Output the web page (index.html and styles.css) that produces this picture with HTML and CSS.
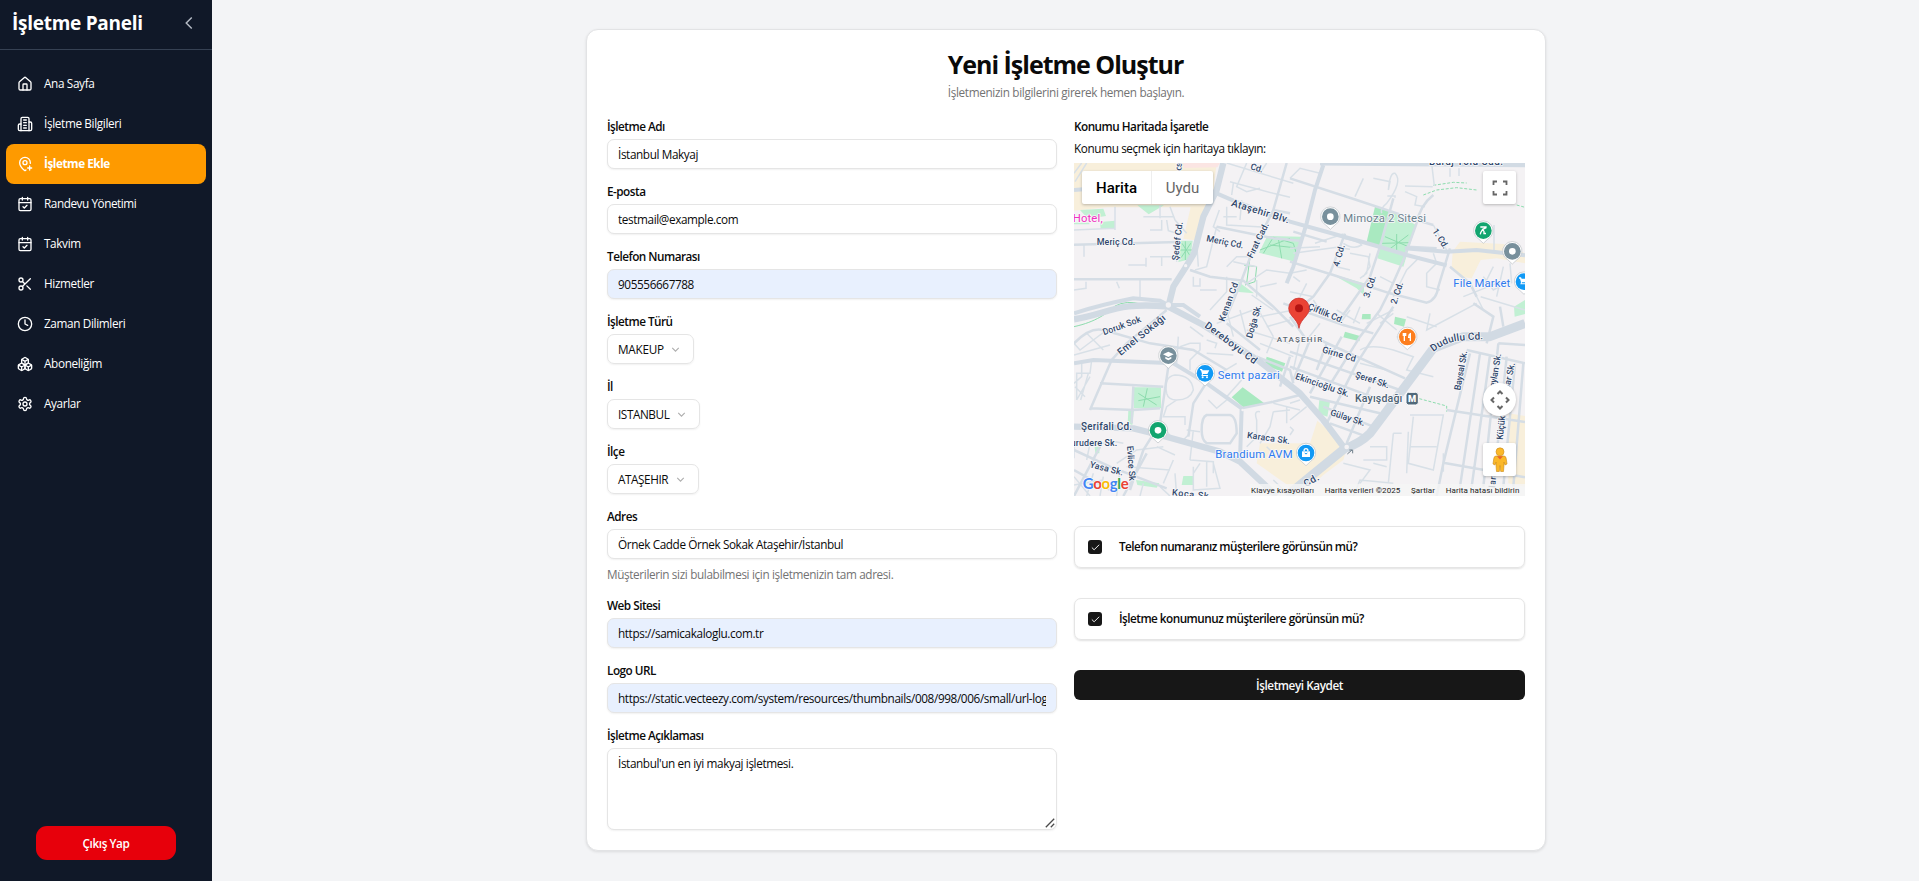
FILE: index.html
```html
<!DOCTYPE html>
<html lang="tr">
<head>
<meta charset="utf-8">
<title>İşletme Paneli</title>
<link rel="stylesheet" href="styles.css">
</head>
<body>
<div class="app">
  <aside class="sidebar">
    <header class="brand">
      <span class="brand-name">İşletme Paneli</span>
      <svg class="collapse" viewBox="0 0 24 24"><path d="m15 18-6-6 6-6"/></svg>
    </header>
    <nav class="nav">
      <a class="nav-item"><svg class="icon" viewBox="0 0 24 24"><path d="M15 21v-8a1 1 0 0 0-1-1h-4a1 1 0 0 0-1 1v8"/><path d="M3 10a2 2 0 0 1 .709-1.528l7-5.999a2 2 0 0 1 2.582 0l7 5.999A2 2 0 0 1 21 10v9a2 2 0 0 1-2 2H5a2 2 0 0 1-2-2z"/></svg><span>Ana Sayfa</span></a>
      <a class="nav-item"><svg class="icon" viewBox="0 0 24 24"><path d="M6 22V4a2 2 0 0 1 2-2h8a2 2 0 0 1 2 2v18Z"/><path d="M6 12H4a2 2 0 0 0-2 2v6a2 2 0 0 0 2 2h2"/><path d="M18 9h2a2 2 0 0 1 2 2v9a2 2 0 0 1-2 2h-2"/><path d="M10 6h4M10 10h4M10 14h4M10 18h4"/></svg><span>İşletme Bilgileri</span></a>
      <a class="nav-item active"><svg class="icon" viewBox="0 0 24 24"><path d="M19.914 11.105A7.298 7.298 0 0 0 20 10a8 8 0 0 0-16 0c0 4.993 5.539 10.193 7.399 11.799a1 1 0 0 0 1.202 0 32 32 0 0 0 .824-.738"/><circle cx="12" cy="10" r="3"/><path d="M16 18h6M19 15v6"/></svg><span>İşletme Ekle</span></a>
      <a class="nav-item"><svg class="icon" viewBox="0 0 24 24"><path d="M8 2v4M16 2v4"/><rect width="18" height="18" x="3" y="4" rx="2"/><path d="M3 10h18M9 16l2 2 4-4"/></svg><span class="wide">Randevu Yönetimi</span></a>
      <a class="nav-item"><svg class="icon" viewBox="0 0 24 24"><path d="M8 2v4M16 2v4"/><rect width="18" height="18" x="3" y="4" rx="2"/><path d="M3 10h18M9 16l2 2 4-4"/></svg><span>Takvim</span></a>
      <a class="nav-item"><svg class="icon" viewBox="0 0 24 24"><circle cx="6" cy="6" r="3"/><path d="M8.12 8.12 12 12M20 4 8.12 15.88"/><circle cx="6" cy="18" r="3"/><path d="M14.8 14.8 20 20"/></svg><span>Hizmetler</span></a>
      <a class="nav-item"><svg class="icon" viewBox="0 0 24 24"><circle cx="12" cy="12" r="10"/><path d="M12 6v6l4 2"/></svg><span>Zaman Dilimleri</span></a>
      <a class="nav-item"><svg class="icon" viewBox="0 0 24 24"><path d="M2.97 12.92A2 2 0 0 0 2 14.63v3.24a2 2 0 0 0 .97 1.71l3 1.8a2 2 0 0 0 2.06 0L12 19v-5.5l-5-3-4.03 2.42Z"/><path d="m7 16.5-4.74-2.85M7 16.5l5-3M7 16.5v5.17"/><path d="M12 13.5V19l3.97 2.38a2 2 0 0 0 2.06 0l3-1.8a2 2 0 0 0 .97-1.71v-3.24a2 2 0 0 0-.97-1.71L17 10.5l-5 3Z"/><path d="m17 16.5-5-3M17 16.5l4.74-2.85M17 16.5v5.17"/><path d="M7.97 4.42A2 2 0 0 0 7 6.13v4.37l5 3 5-3V6.13a2 2 0 0 0-.97-1.71l-3-1.8a2 2 0 0 0-2.06 0l-3 1.8Z"/><path d="M12 8 7.26 5.15M12 8l4.74-2.85M12 13.5V8"/></svg><span>Aboneliğim</span></a>
      <a class="nav-item"><svg class="icon" viewBox="0 0 24 24"><path d="M12.22 2h-.44a2 2 0 0 0-2 2v.18a2 2 0 0 1-1 1.73l-.43.25a2 2 0 0 1-2 0l-.15-.08a2 2 0 0 0-2.73.73l-.22.38a2 2 0 0 0 .73 2.73l.15.1a2 2 0 0 1 1 1.72v.51a2 2 0 0 1-1 1.74l-.15.09a2 2 0 0 0-.73 2.73l.22.38a2 2 0 0 0 2.73.73l.15-.08a2 2 0 0 1 2 0l.43.25a2 2 0 0 1 1 1.73V20a2 2 0 0 0 2 2h.44a2 2 0 0 0 2-2v-.18a2 2 0 0 1 1-1.73l.43-.25a2 2 0 0 1 2 0l.15.08a2 2 0 0 0 2.73-.73l.22-.39a2 2 0 0 0-.73-2.73l-.15-.08a2 2 0 0 1-1-1.74v-.5a2 2 0 0 1 1-1.74l.15-.09a2 2 0 0 0 .73-2.73l-.22-.38a2 2 0 0 0-2.73-.73l-.15.08a2 2 0 0 1-2 0l-.43-.25a2 2 0 0 1-1-1.73V4a2 2 0 0 0-2-2z"/><circle cx="12" cy="12" r="3"/></svg><span>Ayarlar</span></a>
    </nav>
    <button class="logout">Çıkış Yap</button>
  </aside>

  <main class="main">
    <section class="card">
      <h1 class="title">Yeni İşletme Oluştur</h1>
      <p class="subtitle">İşletmenizin bilgilerini girerek hemen başlayın.</p>
      <div class="columns">
        <div class="col fields">
          <div class="field"><label class="label">İşletme Adı</label><input class="input" value="İstanbul Makyaj"></div>
          <div class="field"><label class="label">E-posta</label><input class="input" value="testmail@example.com"></div>
          <div class="field"><label class="label">Telefon Numarası</label><input class="input filled" value="905556667788"></div>
          <div class="field"><label class="label">İşletme Türü</label><div class="select select-type"><span>MAKEUP</span><svg class="chev" viewBox="0 0 24 24"><path d="m6 9 6 6 6-6"/></svg></div></div>
          <div class="field"><label class="label">İl</label><div class="select select-city"><span>ISTANBUL</span><svg class="chev" viewBox="0 0 24 24"><path d="m6 9 6 6 6-6"/></svg></div></div>
          <div class="field"><label class="label">İlçe</label><div class="select select-district"><span>ATAŞEHIR</span><svg class="chev" viewBox="0 0 24 24"><path d="m6 9 6 6 6-6"/></svg></div></div>
          <div class="field"><label class="label">Adres</label><input class="input" value="Örnek Cadde Örnek Sokak Ataşehir/İstanbul"><p class="hint">Müşterilerin sizi bulabilmesi için işletmenizin tam adresi.</p></div>
          <div class="field"><label class="label">Web Sitesi</label><input class="input filled" value="https://samicakaloglu.com.tr"></div>
          <div class="field"><label class="label">Logo URL</label><input class="input filled url" value="https://static.vecteezy.com/system/resources/thumbnails/008/998/006/small/url-logo.jpg"></div>
          <div class="field"><label class="label">İşletme Açıklaması</label><div class="area-wrap"><textarea class="input area">İstanbul'un en iyi makyaj işletmesi.</textarea><svg class="grip" viewBox="0 0 10 10"><path d="M.8 9.200 9.200.8M5.800 9.200 9.200 5.800"/></svg></div></div>
        </div>

        <div class="col">
          <span class="label">Konumu Haritada İşaretle</span>
          <p class="map-help">Konumu seçmek için haritaya tıklayın:</p>
          <div class="map">
            <svg class="map-canvas" viewBox="42 159 1353 999" preserveAspectRatio="none">
              <rect class="land" x="42" y="159" width="1353" height="999"/>
              <g class="sand">
                <path d="M42 159H470L458 260 415 392 370 386 392 292H140L42 302Z"/>
                <path d="M1200 395 1330 402 1395 430V460L1310 445 1262 450 1235 505 1200 500 1175 470 1178 425Z"/>
                <path d="M772 932 835 985 862 1010 850 1050 790 1095 720 1158 690 1130 590 1060 600 1000 750 1000Z"/>
                <path d="M1345 910 1395 918V1130L1345 1120Z"/>
              </g>
              <path class="rose" d="M368 159H480L472 172 372 174Z"/>
              <g class="park">
                <path d="M60 300 130 296 138 318 84 326ZM120 336 165 332V357H122ZM232 286H312L266 313ZM42 338H88V343H42Z"/>
                <path d="M362 392H398L390 448 355 456ZM622 378 722 380 728 392 705 455 597 428ZM535 515 582 550 528 545Z"/>
                <path d="M990 302 1068 345 1030 470 952 445ZM815 492 912 520 912 556 890 535Z"/>
                <path d="M222 832H303V895H222ZM205 902 222 896 217 945 203 940ZM370 1098H402V1125H365ZM228 1110 298 1120 290 1133 232 1125ZM104 1010H118V1030H106Z"/>
                <path d="M778 870 810 875 802 920 774 910ZM1362 590 1395 570V612L1364 620Z"/>
              </g>
              <g class="park deep">
                <path d="M945 290 990 302 960 408 920 395ZM620 740 676 760 666 785 614 765ZM548 832 613 880 550 892 515 862Z"/>
                <path d="M855 665 900 678 898 694 850 682ZM907 612H932V628H905ZM1005 620 1038 628 1032 650 1002 642Z"/>
              </g>
              <path class="green-line" d="M42 650C110 635 140 610 165 588Q200 570 242 582M366 400 392 440M392 400 360 448M376 394V450M362 420H396M610 430 640 382 700 400 712 440M630 405 720 415M655 385 665 445M600 420 690 385"/>
              <path class="green-line" d="M975 380 1045 410M985 420 1045 375M1010 372V425M965 400 1048 398M235 850 290 885M262 835 250 890M235 872 300 860M552 465 590 470 585 515 555 525M570 440 560 520"/>
              <path class="green-line dashed" d="M1120 226 1180 217 1220 219M1090 255 1130 240 1190 233 1250 240M1370 285 1395 292M1078 866 1160 888V905"/>

              <g class="lane">
                <path d="M65 159 42 190M45 215 80 159M165 290V360M42 360 165 355M300 285V325M250 320H340M330 290 345 330 380 370M305 330V360H270M320 330 325 362 350 370"/>
                <path d="M72 405V440M205 465H260M270 440H350V455M258 443V470M305 440V468M240 510V562M42 540 78 535V515M170 515 178 535"/>
                <path d="M400 500V528H420V505M392 480 450 500M410 400 415 470M470 350 440 470 405 480M478 300 460 350 480 365M500 159 700 220M560 159 530 230 560 245 600 235M620 159 600 190"/>
                <path d="M510 215 640 250 690 262M520 220 515 255M500 290 500 345 620 352M490 320H530M545 270 540 330M520 455 590 470M500 470 530 440H580"/>
                <path d="M560 520 620 480 690 490M575 555 640 600M600 530 650 520M590 510V560M500 500V545L450 600M545 510 500 600M420 540H470"/>
                <path d="M690 205 720 175 780 190M910 205 885 260M940 205 990 215 985 240M985 240Q990 185 1005 190 1030 215 980 280 960 295 965 310M982 258H1005V263M1035 228 1118 230M1035 245 1070 260 1065 285 1095 290"/>
                <path d="M1115 160 1123 228M1170 175V200M1197 175V198M690 415 780 410M700 430 830 412 870 418M765 400 850 372M850 385Q900 395 905 405 880 420 850 400M870 430 925 440 930 470 910 500M830 470 870 480M930 430 920 490 900 505"/>
                <path d="M690 490 740 480M700 500 720 515M690 545 760 560M740 520 720 560M960 500 1000 520M1000 560 1040 480 1080 440M1120 430 1130 460 1100 490V530L1140 540M1120 345 1165 430"/>
                <path d="M1302 345V430M1210 560 1310 520M1240 540 1270 600M1270 500 1300 540 1350 510M1330 470 1310 560M1350 460 1355 520M1300 470 1280 510M1262 560 1395 600"/>
                <path d="M42 700 60 720 140 660M42 735 150 705M80 670 130 720M65 760V800L42 820M95 750 90 790 50 790V870M50 870 90 800M62 870 85 790M45 830 75 860"/>
                <path d="M320 850Q310 800 345 795 395 795 400 840 390 870 350 870 325 870 320 850M350 870 320 890 310 920H350L375 920V945M390 700H420V720L390 750V780M360 710 390 700M440 690 470 700 465 715M390 650 430 680M480 790 530 760"/>
                <path d="M445 870 470 895 500 870M500 860 545 810M440 730 520 735M355 680 350 760M380 960 420 965M310 950 340 990M360 1000 390 970M400 960 390 1050M390 1050 460 1055V1090M400 1070V1140L480 1135 460 1060M420 1060 400 1090M440 1055V1130"/>
                <path d="M600 905Q580 900 590 930V980L560 1010M640 905 630 950 600 1000M640 880 720 900M680 890V940M640 905 690 900M620 1010 640 1030M42 990V1045M60 1000H160M90 1000 80 1050M140 990 190 1000M170 1060 230 1020 310 1010M290 1010 345 1035"/>
                <path d="M42 1100 90 1158M100 1090 80 1158M130 1100 120 1158M180 1080 170 1158M42 1125 130 1110M250 1120 240 1158M300 1130 330 1158M340 1050 310 1120M200 1070 330 1080M345 1090 350 1158"/>
              </g>
              <g class="lane">
                <path d="M500 600 520 680M470 640 580 600M540 600 560 680M590 590 640 680M600 620 700 600M620 650 690 630M560 660 690 700M640 680 620 730M600 700 700 740"/>
                <path d="M720 690 700 780M830 600 900 640M870 600 840 640M900 590 880 640M950 610 1010 660M1000 610 960 640M780 640 740 690M1040 620 1130 650M1110 610 1100 660 1250 580M1010 680 1060 700M920 640 1000 600M760 570 780 600"/>
                <path d="M900 720Q930 700 1000 720L1060 740 1040 780 1120 800M900 760 980 780M1050 915H1150L1120 1080 1045 1060 1060 920M1050 1010H1130M1000 970H1025M1000 970 985 1120M1045 965 1040 1090M930 1010H980V1050H910M850 1060 930 1080 900 1120M940 1060 980 1070M880 1158 900 1110 1000 1120M1150 1030V1085"/>
                <path d="M640 1110 690 1158M690 930 740 890M690 880 720 870M690 950 700 960 690 975"/>
              </g>

              <g class="street">
                <path d="M42 404 355 396M42 508 335 508M680 159 640 300 575 430 545 510M640 300 690 310M390 480 450 500 550 512 640 590 700 650M545 512 500 620M470 350 640 385 720 392"/>
                <path d="M700 365 800 395M690 205 890 270 1085 335 1120 345M1120 255Q1080 285 1068 345L1030 450 990 540 960 600 900 680 800 840M1000 265 960 410 930 500 860 600 830 640"/>
                <path d="M855 371 810 490 760 560 710 600M690 455 820 495 990 550 1100 578Q1130 570 1135 530L1170 415M1130 415 1040 410M1170 470 1230 520 1250 560"/>
                <path d="M320 600 200 700 155 750 120 830 90 900M120 820 310 830M90 895 220 900 300 895M325 770 300 940 250 1020 210 1140M435 825 400 880 385 980M42 700Q90 650 130 660L270 700 400 720 500 780M220 830 215 940"/>
                <path d="M440 915H510Q530 920 530 970L510 1000H440Q425 990 425 960 425 920 440 915ZM545 895 640 875 720 855M590 740 690 780 700 820M500 640 600 720M690 620 740 690M42 1020 150 1070 320 1135M42 1080 150 1140M42 1158 120 1010M190 1158 260 1030"/>
              </g>
              <g class="street">
                <path d="M670 580 750 610 850 645 940 670M780 690 1035 805M690 725 1020 840M690 770 990 880M750 860 960 910M790 890 940 950M810 940 920 980M845 680 750 850M890 760 800 940M930 830 860 1000M1000 590 890 760M690 740 660 830M750 690 700 810M800 700 770 780"/>
                <path d="M1220 720 1395 760M1160 900 1395 936M1150 1058 1395 1102M1230 730 1150 1060 1130 1158M1260 730 1200 1130M1290 735 1235 1130M1315 700 1270 1130M1340 740 1300 1130M1365 760 1330 1130M1390 760 1360 1130M1315 700 1395 705M1240 580 1300 620 1280 700M1320 590 1330 650"/>
              </g>
              <g class="road">
                <path class="top-road" d="M780 159 1395 164"/>
                <path d="M790 165 765 240 740 340 700 470 680 520"/>
                <path d="M470 250 520 272 690 335 780 360 940 405 1040 435 1160 466M1035 415 1160 425 1250 420 1395 436"/>
                <path d="M42 240 70 238M42 610Q120 585 220 565L300 572 325 585 370 585 420 620"/>
                <path d="M42 760 100 750 340 760 440 820 545 895 540 1050"/>
              </g>
              <g class="avenue">
                <path d="M490 159 470 240 430 320 402 430 375 475 340 530 325 590"/>
                <path d="M42 628C150 610 170 575 325 590L430 645 600 755 720 850 790 930 850 1010"/>
                <path d="M42 950 220 955 300 975 480 1025 540 1055 650 1158"/>
                <path class="thick" d="M1395 640 1290 680H1210L1120 715 990 890 930 970Q900 1000 855 1015L750 1100 680 1158"/>
              </g>
              <circle class="round" cx="325" cy="585" r="8"/><circle class="round" cx="377" cy="467" r="5"/><circle class="round" cx="860" cy="1011" r="7"/><circle class="round" cx="548" cy="900" r="4"/>
              <path class="arrow" d="M862 1032 876 1020M868 1020H878V1030"/>

              <g class="street-name">
                <text x="110" y="406" textLength="116">Meriç Cd.</text>
                <text transform="translate(438 394) rotate(11)" textLength="113">Meriç Cd.</text>
                <text transform="translate(512 287) rotate(17)" textLength="180" class="big">Ataşehir Blv.</text>
                <text transform="translate(354 452) rotate(-83)" textLength="116">Şedef Cd.</text>
                <text transform="translate(364 182) rotate(-85)" textLength="50">os Cd.</text>
                <text transform="translate(570 178) rotate(15)" textLength="38">Cd.</text>
                <text transform="translate(577 446) rotate(-64)" textLength="114">Fırat Cad.</text>
                <text transform="translate(493 636) rotate(-70)" textLength="122">Kenan Cd</text>
                <text transform="translate(576 686) rotate(-74)" textLength="104">Doğa Sk.</text>
                <text transform="translate(132 676) rotate(-20)" textLength="120">Doruk Sok</text>
                <text transform="translate(182 738) rotate(-39)" textLength="176" class="big">Emel Sokağı</text>
                <text transform="translate(432 650) rotate(37)" textLength="188" class="big">Dereboyu Cd</text>
                <text x="63" y="961" textLength="153" class="big">Şerifali Cd.</text>
                <text x="32" y="1008" textLength="140">urudere Sk.</text>
                <text transform="translate(201 1008) rotate(86)" textLength="105">Evlice Sk</text>
                <text transform="translate(88 1072) rotate(14)" textLength="102">Yasa Sk.</text>
                <text transform="translate(335 1156) rotate(6)" textLength="120">Koca Sk.</text>
                <text transform="translate(560 984) rotate(8)" textLength="130">Karaca Sk.</text>
                <text x="1107" y="164" textLength="222" class="big">Baraj Yolu Cad.</text>
                <text transform="translate(836 472) rotate(-74)" textLength="68">4. Cd.</text>
                <text transform="translate(927 565) rotate(-72)" textLength="68">3. Cd.</text>
                <text transform="translate(1009 584) rotate(-72)" textLength="68">2. Cd.</text>
                <text transform="translate(1116 363) rotate(57)" textLength="66">1. Cd.</text>
                <text transform="translate(742 596) rotate(23)" textLength="114">Çiftlik Cd.</text>
                <text transform="translate(785 727) rotate(16)" textLength="104">Girne Cd</text>
                <text transform="translate(884 802) rotate(18)" textLength="106">Şeref Sk.</text>
                <text transform="translate(704 806) rotate(19)" textLength="170">Ekincioğlu Sk.</text>
                <text transform="translate(809 915) rotate(18)" textLength="108">Gülay Sk.</text>
                <text class="big" x="1120 1136 1151 1167 1183 1191 1199 1216 1224 1244 1261" y="726 714 706 699 694 693 692 690 690 689 688" rotate="-36 -30 -24 -16 -10 -8 -5 -3 -3 -3 -3">Dudullu Cd.</text>
                <text transform="translate(1201 842) rotate(-80)" textLength="120">Baysal Sk.</text>
                <text transform="translate(1303 850) rotate(-80)" textLength="120">Ceylan Sk.</text>
                <text transform="translate(1348 840) rotate(-78)" textLength="82">nar Sk.</text>
                <text transform="translate(1328 990) rotate(-84)" textLength="72">Küçük</text>
                <text transform="translate(1305 1134) rotate(-84)" textLength="34">lar</text>
                <text transform="translate(738 1132) rotate(-30)" textLength="48" class="big">Cd.</text>
              </g>
              <text class="area-name" x="650" y="697" textLength="137">ATAŞEHİR</text>
              <text class="place pink" x="38" y="337" textLength="90">Hotel,</text>
              <text class="place gray" x="850" y="336" textLength="248">Mimoza 2 Sitesi</text>
              <text class="place blue" x="1180" y="531" textLength="171">File Market</text>
              <text class="place blue" x="473" y="807" textLength="186">Semt pazari</text>
              <text class="place blue" x="466" y="1045" textLength="232">Brandium AVM</text>
              <text class="place slate" x="885" y="876" textLength="142">Kayışdağı</text>
              <rect class="metro" x="1038" y="847" width="37" height="38" rx="8"/><text class="metro-m" x="1044" y="876">M</text>

              <g class="poi">
                <g transform="translate(811 320)"><path class="drop" d="M0 38 -14 25A29 29 0 1 1 14 25Z"/><circle r="25" fill="#78909c"/><circle r="10" fill="#fff"/></g>
                <g transform="translate(1357 424)"><path class="drop" d="M0 38 -14 25A29 29 0 1 1 14 25Z"/><circle r="25" fill="#78909c"/><circle r="10" fill="#fff"/></g>
                <g transform="translate(1270 362)"><path class="drop" d="M0 38 -14 25A29 29 0 1 1 14 25Z"/><circle r="25" fill="#12a56f"/><path class="glyph" d="M-9-11H10M9-9-2-4-8 6-9 11M-2-4 2 2V11M6 6V11"/></g>
                <g transform="translate(325 737)"><path class="drop" d="M0 38 -14 25A29 29 0 1 1 14 25Z"/><circle r="25" fill="#78909c"/><path fill="#fff" d="M-16-4 0-12 16-4 0 4ZM-9 3 0 8 9 3V9L0 14-9 9Z"/></g>
                <g transform="translate(435 790)"><path class="drop" d="M0 38 -14 25A29 29 0 1 1 14 25Z"/><circle r="25" fill="#1199f5"/><path fill="#fff" d="M-15-13H-9L-7-9H13L7 2H-6L-7 5H9V8H-11L-9 2-12-9H-15Z"/><circle cx="-7" cy="12" r="3" fill="#fff"/><circle cx="6" cy="12" r="3" fill="#fff"/></g>
                <g transform="translate(1392 515)"><path class="drop" d="M0 38 -14 25A29 29 0 1 1 14 25Z"/><circle r="25" fill="#1199f5"/><path fill="#fff" d="M-15-13H-9L-7-9H13L7 2H-6L-7 5H9V8H-11L-9 2-12-9H-15Z"/></g>
                <g transform="translate(294 961)"><path class="drop" d="M0 38 -14 25A29 29 0 1 1 14 25Z"/><circle r="25" fill="#12a56f"/><circle r="10" fill="#fff"/></g>
                <g transform="translate(738 1029)"><path class="drop" d="M0 38 -14 25A29 29 0 1 1 14 25Z"/><circle r="25" fill="#1199f5"/><path fill="#fff" d="M-12-5H12V12H-12Z"/><path class="glyph" d="M-6-5Q-6-13 0-13 6-13 6-5"/><path d="M-4 0Q0 6 4 0" fill="none" stroke="#1199f5" stroke-width="3"/></g>
                <g transform="translate(1042 681)"><path class="drop" d="M0 38 -14 25A29 29 0 1 1 14 25Z"/><circle r="25" fill="#fd7e1e"/><path class="glyph" d="M-9-12V12M-12-12V-5H-5V-12M9 12V-10Q4-8 4 1H9"/></g>
              </g>
              <g transform="translate(717 563)"><path fill="#ea4335" stroke="#c5221f" stroke-width="2" d="M0 92C-3 74-12 66-22 54A31 31 0 1 1 22 54C12 66 3 74 0 92Z"/><circle cy="32" r="12" fill="#b31412"/></g>
              <g class="google"><text x="68" y="1138" textLength="138"><tspan fill="#4285f4">G</tspan><tspan fill="#ea4335">o</tspan><tspan fill="#fbbc04">o</tspan><tspan fill="#4285f4">g</tspan><tspan fill="#34a853">l</tspan><tspan fill="#ea4335">e</tspan></text></g>
              <path fill="#f5f5f5" fill-opacity=".8" d="M568 1122H1395V1158H568Z"/>
              <g class="legal">
                <text x="573" y="1148" textLength="189">Klavye kısayolları</text>
                <text x="794" y="1148" textLength="227">Harita verileri ©2025</text>
                <text x="1053" y="1148" textLength="72">Şartlar</text>
                <text x="1157" y="1148" textLength="221">Harita hatası bildirin</text>
              </g>
            </svg>
            <div class="map-type"><span class="on">Harita</span><span>Uydu</span></div>
            <div class="ctl fullscreen"><svg viewBox="0 0 18 18"><path d="M2.500 6V2.500H6M12 2.500H15.500V6M15.500 12V15.500H12M6 15.500H2.500V12"/></svg></div>
            <div class="ctl pan"><svg viewBox="0 0 20 20"><path d="M7.500 4 10 1.500 12.500 4M7.500 16 10 18.500 12.500 16M4 7.500 1.500 10 4 12.500M16 7.500 18.500 10 16 12.500"/></svg></div>
            <div class="ctl pegman"><svg viewBox="0 0 16 26"><path fill="#fbb829" stroke="#c98a1b" stroke-width=".6" d="M4 9H12Q14 9 14.300 12L15 17 13 18 12 15V18L11.500 24.500H8.700L8 18.500 7.300 24.500H4.500L4 18V15L3 18 1 17 1.700 12Q2 9 4 9Z"/><circle cx="8" cy="4.800" r="4" fill="#fbb829" stroke="#c98a1b" stroke-width=".6"/><path fill="#e8602c" d="M5 9.300H11L8 12.500Z"/></svg></div>
          </div>
          <div class="check-card"><span class="box"><svg viewBox="0 0 24 24"><path d="M20 6 9 17l-5-5"/></svg></span><span>Telefon numaranız müşterilere görünsün mü?</span></div>
          <div class="check-card"><span class="box"><svg viewBox="0 0 24 24"><path d="M20 6 9 17l-5-5"/></svg></span><span>İşletme konumunuz müşterilere görünsün mü?</span></div>
          <button class="save">İşletmeyi Kaydet</button>
        </div>
      </div>
    </section>
  </main>
</div>
</body>
</html>
```
FILE: styles.css
```css
* { box-sizing: border-box; margin: 0; }
body { font-family: "Open Sans", "Noto Sans", sans-serif; font-size: 11.75px; color: #0a0a0a; background: #f3f4f6; overflow: hidden; }
button, input, textarea { font: inherit; color: inherit; border: 0; outline: 0; }
.app { display: flex; height: 881px; }

.sidebar { width: 212px; background: #101828; color: #fff; display: flex; flex-direction: column; }
.brand { height: 50px; padding: 0 12px 4px 12px; display: flex; align-items: center; justify-content: space-between; border-bottom: 1px solid #364153; }
.brand-name { font-size: 19px; font-weight: 700; letter-spacing: -0.27px; }
.collapse { width: 22px; height: 24px; fill: none; stroke: #b4bac4; stroke-width: 1.6; }
.nav { padding: 14px 6px; flex: 1; }
.nav-item { height: 40px; padding-left: 11px; display: flex; align-items: center; gap: 11px; border-radius: 8px; letter-spacing: -0.35px; }
.nav-item span { padding-bottom: 2px; }
.nav-item .wide { letter-spacing: -0.44px; }
.nav-item.active { background: #fe9a00; font-weight: 700; letter-spacing: -0.46px; }
.icon { width: 16px; height: 16px; fill: none; stroke: currentColor; stroke-width: 2; stroke-linecap: round; stroke-linejoin: round; }
.logout { width: 140px; height: 34px; margin: 0 0 21px 36px; border-radius: 11px; background: #e7000b; color: #fff; font-weight: 600; letter-spacing: -0.42px; }

.main { flex: 1; padding: 29px 0 0 374px; }
.card { width: 960px; height: 822px; padding: 19px 19px 20px 20px; background: #fff; border: 1px solid #e2e3e5; border-radius: 12px; box-shadow: 0 1px 3px rgba(0,0,0,.1); }
.title { height: 31px; line-height: 31px; font-size: 25px; font-weight: 700; text-align: center; letter-spacing: -1px; padding-right: 2px; }
.subtitle { height: 17px; line-height: 17px; margin-top: 4px; text-align: center; color: #737373; letter-spacing: -0.34px; padding-right: 1px; }
.columns { display: grid; grid-template-columns: 450px 451px; gap: 17px; margin-top: 19px; }
.col { display: flex; flex-direction: column; }
.fields { gap: 16px; }
.field { display: flex; flex-direction: column; gap: 7px; align-items: flex-start; }
.label { height: 12px; line-height: 12px; font-weight: 600; letter-spacing: -0.51px; }
.input { width: 100%; height: 30px; padding: 0 10px; border: 1px solid #e5e5e5; border-radius: 7px; background: #fff; box-shadow: 0 1px 2px rgba(0,0,0,.06); letter-spacing: -0.39px; }
.filled { background: #e8f0fe; }
.url { letter-spacing: -0.37px; }
.area-wrap { width: 100%; position: relative; }
.area { height: 82px; padding: 6px 10px; line-height: 17px; resize: none; display: block; }
.grip { position: absolute; right: 2px; bottom: 2px; width: 10px; height: 10px; fill: none; stroke: #4a4a4a; stroke-width: 1.3; }
.select { height: 30px; padding: 0 11px 0 10px; border: 1px solid #e5e5e5; border-radius: 7px; display: flex; align-items: center; justify-content: space-between; box-shadow: 0 1px 2px rgba(0,0,0,.06); letter-spacing: -0.42px; }
.select-type { width: 87px; letter-spacing: -0.27px; }
.select-city { width: 93px; }
.select-district { width: 92px; }
.chev { width: 13px; height: 13px; fill: none; stroke: #adadad; stroke-width: 2; }
.hint { height: 17px; line-height: 17px; color: #737373; letter-spacing: -0.36px; }

.map-help { height: 17px; line-height: 17px; margin: 8px 0 6px; letter-spacing: -0.38px; }
.map { height: 333px; position: relative; overflow: hidden; font-family: Roboto, sans-serif; letter-spacing: 0; }
.map-canvas { display: block; width: 451px; height: 333px; }
.land { fill: #f4f2f4; }
.sand { fill: #f8efdb; }
.rose { fill: #fbe5e3; }
.park { fill: #c1f0d3; }
.deep { fill: #a9e9c0; }
.green-line { fill: none; stroke: #8ddcae; stroke-width: 3; }
.dashed { stroke-dasharray: 9 5; }
.lane { fill: none; stroke: #d8e0e7; stroke-width: 4.5; }
.street { fill: none; stroke: #d5dde5; stroke-width: 7.5; }
.road { fill: none; stroke: #d2dbe4; stroke-width: 12; }
.top-road { stroke-width: 15; }
.avenue { fill: none; stroke: #d1dae3; stroke-width: 19; stroke-linejoin: round; }
.thick { stroke-width: 27; }
.round { fill: #f4f2f4; }
.arrow { fill: none; stroke: #70808c; stroke-width: 3; }
.map-canvas text { paint-order: stroke; stroke: #f8f8fa; stroke-width: 5; stroke-linejoin: round; }
.street-name { font-size: 27px; font-weight: 500; fill: #30476b; }
.big { font-size: 30px; }
.area-name { font-size: 24px; font-weight: 500; fill: #5c6670; }
.place { font-size: 34px; font-weight: 400; }
.pink { fill: #f032c0; }
.gray { fill: #6b818e; }
.blue { fill: #2f7aee; }
.slate { fill: #4d6374; font-size: 32px; font-weight: 500; }
.metro { fill: #50697b; stroke: #fff; stroke-width: 3; }
.map-canvas .metro-m { font-size: 28px; font-weight: 900; fill: #fff; stroke: none; }
.drop { fill: #fff; stroke: #bbc0c4; stroke-width: 2; }
.glyph { fill: none; stroke: #fff; stroke-width: 4; }
.google { font-family: Lato, sans-serif; font-size: 45px; font-weight: 700; }
.legal { font-size: 24px; fill: #222; }
.map-canvas .legal text { stroke: none; }
.map-type { position: absolute; left: 8px; top: 8px; width: 131px; height: 33px; display: flex; background: #fff; border-radius: 2px; box-shadow: 0 1px 3px rgba(0,0,0,.25); font-size: 15px; line-height: 34px; color: #666; text-align: center; }
.map-type span { flex: 1; }
.map-type .on { flex: 0 0 70px; border-right: 1px solid #eee; color: #000; font-weight: 500; }
.ctl { position: absolute; right: 9px; width: 33px; height: 33px; background: #fff; border-radius: 2px; box-shadow: 0 1px 3px rgba(0,0,0,.25); display: flex; align-items: center; justify-content: center; }
.ctl svg { fill: none; stroke: #666; stroke-width: 1.8; }
.fullscreen { top: 8px; }
.fullscreen svg { width: 18px; height: 18px; }
.pan { top: 220px; border-radius: 50%; }
.pan svg { width: 20px; height: 20px; stroke-width: 2; }
.pegman { top: 280px; }
.pegman svg { width: 16px; height: 26px; stroke: none; }

.check-card { height: 42px; margin-top: 30px; padding: 13px 13px 0; border: 1px solid #e5e5e5; border-radius: 7px; box-shadow: 0 1px 2px rgba(0,0,0,.12); display: flex; gap: 17px; font-weight: 600; line-height: 12px; letter-spacing: -0.52px; }
.box { width: 14px; height: 14px; border-radius: 3px; background: #171717; display: flex; align-items: center; justify-content: center; }
.box svg { width: 11px; height: 11px; fill: none; stroke: #fff; stroke-width: 2; }
.save { height: 30px; margin-top: 30px; border-radius: 6px; background: #171717; color: #fafafa; font-weight: 600; letter-spacing: -0.44px; }
```
